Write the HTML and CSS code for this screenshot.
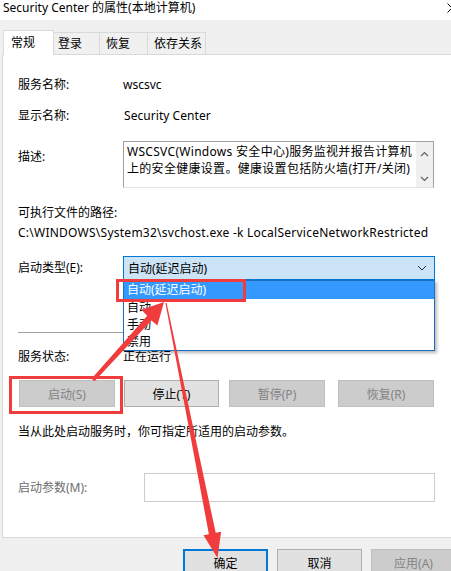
FILE: index.html
```html
<!DOCTYPE html>
<html lang="zh-CN">
<head>
<meta charset="utf-8">
<title>Security Center 的属性</title>
<link rel="stylesheet" href="styles.css">
</head>
<body>
<div class="window">
  <div class="titlebar">
    <span class="title">Security Center 的属性(本地计算机)</span>
    <svg class="close" width="10" height="10" viewBox="0 0 10 10"><path d="M0.5 0.5L9.5 9.5M0.5 9.5L9.5 0.5" stroke="#000" stroke-width="1" fill="none"/></svg>
  </div>

  <div class="tabs">
    <div class="tab active">常规</div>
    <div class="tab t2">登录</div>
    <div class="tab t3">恢复</div>
    <div class="tab t4">依存关系</div>
  </div>

  <div class="panel">
    <div class="row r-name"><span class="label">服务名称:</span><span class="value">wscsvc</span></div>
    <div class="row r-disp"><span class="label">显示名称:</span><span class="value">Security Center</span></div>
    <div class="row r-desc">
      <span class="label desc-label">描述:</span>
      <div class="descbox">
        <div class="desctext">WSCSVC(Windows 安全中心)服务监视并报告计算机上的安全健康设置。健康设置包括防火墙(打开/关闭)</div>
        <div class="vscroll">
          <svg width="9" height="6" viewBox="0 0 9 6"><path d="M1 5L4.5 1.5L8 5" stroke="#606060" stroke-width="1.2" fill="none"/></svg>
          <svg width="9" height="6" viewBox="0 0 9 6"><path d="M1 1L4.5 4.5L8 1" stroke="#606060" stroke-width="1.2" fill="none"/></svg>
        </div>
      </div>
    </div>
    <div class="r-pathlabel">可执行文件的路径:</div>
    <div class="r-path">C:\WINDOWS\System32\svchost.exe -k LocalServiceNetworkRestricted</div>
    <div class="row r-type">
      <span class="label">启动类型(E):</span>
      <div class="combo-wrap">
        <div class="combo">
          <span>自动(延迟启动)</span>
          <svg width="10" height="6" viewBox="0 0 10 6"><path d="M1 1L5 5L9 1" stroke="#333" stroke-width="1" fill="none"/></svg>
        </div>
        <div class="droplist">
          <div class="opt sel">自动(延迟启动)</div>
          <div class="opt">自动</div>
          <div class="opt">手动</div>
          <div class="opt">禁用</div>
        </div>
      </div>
    </div>
    <div class="separator"></div>
    <div class="row r-status"><span class="label">服务状态:</span><span class="value">正在运行</span></div>
    <div class="btnrow">
      <div class="btn disabled b1">启动(S)</div>
      <div class="btn b2">停止(T)</div>
      <div class="btn disabled b3">暂停(P)</div>
      <div class="btn disabled b4">恢复(R)</div>
    </div>
    <div class="hint">当从此处启动服务时，你可指定所适用的启动参数。</div>
    <div class="row r-params">
      <span class="label plabel">启动参数(M):</span>
      <div class="pinput"></div>
    </div>
  </div>

  <div class="footer">
    <div class="btn fbtn default">确定</div>
    <div class="btn fbtn">取消</div>
    <div class="btn fbtn disabled">应用(A)</div>
  </div>

  <svg class="annot" width="451" height="571" viewBox="0 0 451 571">
    <rect x="10.5" y="377.5" width="111" height="35" fill="none" stroke="#f03c3c" stroke-width="3"/>
    <rect x="117.5" y="280.5" width="127" height="20" fill="none" stroke="#f03c3c" stroke-width="3"/>
    <polygon fill="#f03c3c" points="91.5,378.7 147.2,315.8 141.5,309.8 164,302 157.4,325.6 151.4,320.6 94.5,381.3"/>
    <polygon fill="#f03c3c" points="165.4,303.1 166.6,302.9 215.7,532.8 221.1,531.7 217.5,558 203.5,535.3 208.9,534.2"/>
  </svg>
</div>
</body>
</html>
```

FILE: styles.css
```css
* { box-sizing: border-box; }
html, body { margin: 0; padding: 0; }
body {
  width: 451px;
  height: 571px;
  overflow: hidden;
  background: #f0f0f0;
  font-family: "Noto Sans", "Noto Sans CJK SC", sans-serif;
  font-size: 12px;
  color: #000;
}
.window { position: relative; width: 451px; height: 571px; overflow: hidden; }

.titlebar {
  height: 20px;
  background: #fff;
  display: flex;
  justify-content: space-between;
  align-items: flex-start;
  padding-left: 3px;
  overflow: hidden;
}
.title { line-height: 16px; white-space: nowrap; }
.close { margin-top: 3px; margin-right: -6px; flex: none; }

.tabs {
  display: flex;
  align-items: flex-end;
  height: 34px;
  padding-top: 10px;
  padding-left: 3px;
}
.tab {
  height: 22px;
  line-height: 21px;
  border: 1px solid #d9d9d9;
  border-bottom: none;
  margin-left: -1px;
  background: #f0f0f0;
  white-space: nowrap;
}
.tab.active {
  margin-left: 0;
  width: 51px;
  height: 25px;
  line-height: 23px;
  padding-left: 7px;
  background: #fff;
  margin-bottom: -1px;
  position: relative;
  z-index: 1;
}
.t2 { width: 47px; padding-left: 4px; }
.t3 { width: 49px; padding-left: 6px; }
.t4 { width: 59px; padding-left: 6px; }

.panel {
  margin-left: 2px;
  width: 470px;
  height: 484px;
  background: #fff;
  border: 1px solid #d9d9d9;
  padding-left: 15px;
}
.row { display: flex; align-items: flex-start; }
.label { width: 105px; flex: none; line-height: 16px; white-space: nowrap; }
.value { line-height: 16px; white-space: nowrap; }

.r-name { margin-top: 22px; }
.r-disp { margin-top: 15px; }
.r-disp .value { margin-left: 1px; letter-spacing: 0.05px; }
.r-desc { margin-top: 17px; }
.desc-label { padding-top: 8px; }
.descbox {
  width: 311px;
  height: 47px;
  border: 1px solid #a0a0a0;
  border-bottom-color: #e3e3e3;
  display: flex;
}
.desctext {
  flex: 1;
  padding: 1px 0 0 3px;
  line-height: 17px;
  letter-spacing: 0.3px;
  overflow: hidden;
}
.vscroll {
  width: 17px;
  flex: none;
  background: #f0f0f0;
  display: flex;
  flex-direction: column;
  justify-content: space-between;
  align-items: center;
  padding: 9px 0 5px;
}
.vscroll svg { display: block; }

.r-pathlabel { margin-top: 17px; line-height: 16px; }
.r-path { margin-top: 4px; line-height: 16px; white-space: nowrap; letter-spacing: 0.25px; }

.r-type { margin-top: 15px; align-items: center; }
.combo-wrap { position: relative; width: 312px; }
.combo {
  height: 24px;
  background: #cce4f7;
  border: 1px solid #0078d7;
  display: flex;
  align-items: center;
  justify-content: space-between;
  padding: 0 7px 0 4px;
}
.droplist {
  position: absolute;
  top: 100%;
  left: 0;
  width: 312px;
  background: #fff;
  border: 1px solid #1a6fc0;
  box-shadow: 2px 2px 3px rgba(0, 0, 0, 0.28);
  z-index: 2;
}
.opt { height: 17px; line-height: 17px; padding-left: 3px; }
.opt.sel { height: 18px; line-height: 18px; background: #3399ff; color: #fff; }

.separator {
  margin-top: 52px;
  width: 417px;
  height: 1px;
  background: #a0a0a0;
}
.r-status { margin-top: 16px; }

.btnrow { display: flex; margin-top: 15px; height: 27px; }
.btn {
  height: 27px;
  background: #e1e1e1;
  border: 1px solid #adadad;
  display: flex;
  align-items: center;
  justify-content: center;
  white-space: nowrap;
}
.btn.disabled { background: #cccccc; border-color: #bfbfbf; color: #838383; }
.b1 { width: 96px; margin-left: 1px; }
.b2 { width: 95px; margin-left: 9px; }
.b3 { width: 96px; margin-left: 10px; }
.b4 { width: 96px; margin-left: 13px; }

.hint { margin-top: 17px; line-height: 16px; white-space: nowrap; }

.r-params { margin-top: 33px; align-items: center; }
.plabel { width: 126px; color: #6d6d6d; }
.pinput { width: 291px; height: 29px; border: 1px solid #cccccc; background: #fff; }

.footer { display: flex; padding-top: 11px; padding-left: 183px; }
.fbtn { width: 85px; height: 28px; flex: none; margin-right: 10px; }
.fbtn + .fbtn { margin-left: -1px; }
.fbtn.default { border: 2px solid #0078d7; }

.annot { position: absolute; left: 0; top: 0; pointer-events: none; z-index: 5; }
```
